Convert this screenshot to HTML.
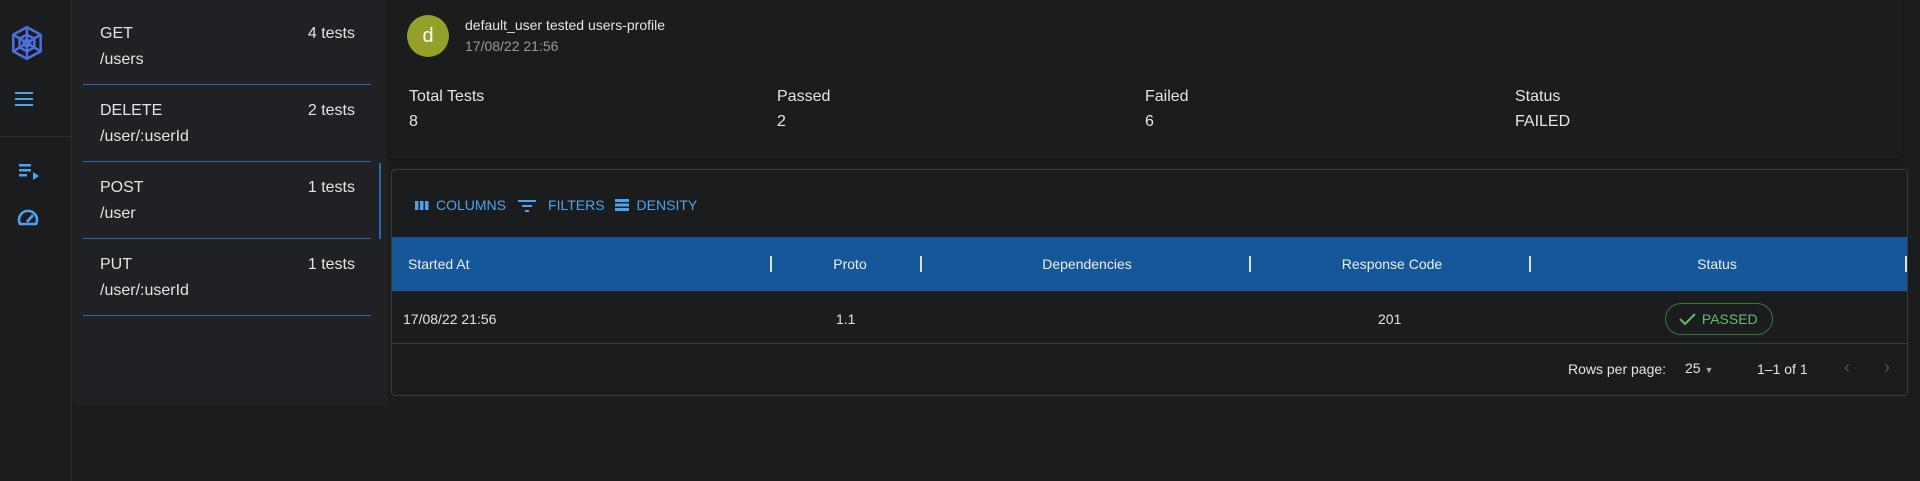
<!DOCTYPE html>
<html><head><meta charset="utf-8"><style>
*{box-sizing:border-box;margin:0;padding:0}
body{width:1920px;height:481px;background:#1b1c1e;font-family:"Liberation Sans",sans-serif;color:#e4e4e4;position:relative;overflow:hidden;font-size:16px}
.abs{position:absolute}
.side{left:0;top:0;width:72px;height:481px;border-right:1px solid #2a2b2d;background:#1b1c1e}
.list{left:73px;top:0;width:315px;height:405px;background:#202124}
.item{position:absolute;left:10px;width:288px;height:77px;border-bottom:1px solid #2a68b0}
.item .m{position:absolute;left:17px;top:17px}
.item .c{position:absolute;right:16px;top:17px}
.item .p{position:absolute;left:17px;top:43px}
.hdr{left:388px;top:0;width:1514px;height:159px;background:#1b1c1e;box-shadow:0 1px 2px #111}
.stat{position:absolute;top:88px;font-size:16px}
.stat div+div{margin-top:7px}
.tbl{left:391px;top:169px;width:1517px;height:227px;border:1px solid #3a3b3d;border-radius:4px}
.tool{position:absolute;top:27px;left:22px;color:#4da3f0;font-size:14px;display:flex;align-items:center}
.thead{position:absolute;left:0;top:67px;width:1515px;height:55px;background:#155799;font-size:14px;color:#eee}
.thead span{position:absolute;top:19px}
.sep{position:absolute;top:19px;width:2px;height:16px;background:#ddd}
.row span{position:absolute;font-size:14px}
</style></head><body>
<div class="abs side">
<svg class="abs" style="left:8px;top:23px" width="40" height="40" viewBox="0 0 38 38"><g fill="none" stroke="#4a6fe0" stroke-width="2.4"><polygon points="18,4 31,11 31,27 18,34 5,27 5,11"/><polygon points="18,11 25,15 25,23 18,27 11,23 11,15"/><path d="M18,4V34M5,11L31,27M31,11L5,27"/><circle cx="18" cy="19" r="3"/></g></svg>
<svg class="abs" style="left:14px;top:91px" width="20" height="16"><g fill="#4da3f0"><rect x="1" y="1" width="18" height="2"/><rect x="1" y="7" width="18" height="2"/><rect x="1" y="13" width="18" height="2"/></g></svg>
<div class="abs" style="left:0;top:136px;width:72px;height:1px;background:#2f3033"></div>
<svg class="abs" style="left:17px;top:162px" width="24" height="20"><g fill="#4da3f0"><rect x="2" y="2" width="12" height="2.5"/><rect x="2" y="7" width="12" height="2.5"/><rect x="2" y="12" width="8" height="2.5"/><polygon points="16,10 16,18 22,14"/></g></svg>
<svg class="abs" style="left:16px;top:206px" width="24" height="22"><path d="M4,18A9,9 0 1 1 20,18Z" fill="none" stroke="#4da3f0" stroke-width="2.6"/><path d="M11,16L17,9" stroke="#4da3f0" stroke-width="2.8"/></svg>
</div>
<div class="abs list">
<div class="item" style="top:8px"><span class="m">GET</span><span class="c">4 tests</span><span class="p">/users</span></div>
<div class="item" style="top:85px"><span class="m">DELETE</span><span class="c">2 tests</span><span class="p">/user/:userId</span></div>
<div class="item" style="top:162px"><span class="m">POST</span><span class="c">1 tests</span><span class="p">/user</span></div>
<div class="item" style="top:239px"><span class="m">PUT</span><span class="c">1 tests</span><span class="p">/user/:userId</span></div>
<div class="abs" style="left:306px;top:163px;width:2px;height:76px;background:#2a68b0"></div>
</div>
<div class="abs hdr">
<div class="abs" style="left:19px;top:15px;width:42px;height:42px;border-radius:50%;background:#94a02a;color:#fff;text-align:center;line-height:42px;font-size:20px">d</div>
<div class="abs" style="left:77px;top:17px;font-size:14px">default_user tested users-profile</div>
<div class="abs" style="left:77px;top:38px;font-size:14px;color:#999">17/08/22 21:56</div>
<div class="stat" style="left:21px"><div>Total Tests</div><div>8</div></div>
<div class="stat" style="left:389px"><div>Passed</div><div>2</div></div>
<div class="stat" style="left:757px"><div>Failed</div><div>6</div></div>
<div class="stat" style="left:1127px"><div>Status</div><div>FAILED</div></div>
</div>
<div class="abs tbl">
<div class="tool">
<svg width="16" height="14"><g fill="#4da3f0"><rect x="1" y="3" width="3.5" height="9"/><rect x="6" y="3" width="3.5" height="9"/><rect x="11" y="3" width="3.5" height="9"/></g></svg><span style="margin:0 12px 0 6px">COLUMNS</span>
<svg width="18" height="14"><g fill="#4da3f0"><rect x="0" y="2" width="18" height="2"/><rect x="4" y="7" width="10" height="2"/><rect x="7" y="12" width="4" height="2"/></g></svg><span style="margin:0 10px 0 12px">FILTERS</span>
<svg width="14" height="14"><g fill="#4da3f0"><rect x="0" y="1" width="14" height="3"/><rect x="0" y="5.5" width="14" height="3"/><rect x="0" y="10" width="14" height="3"/></g></svg><span style="margin-left:8px">DENSITY</span>
</div>
<div class="thead">
<span style="left:16px">Started At</span><div class="sep" style="left:378px"></div>
<span style="width:60px;text-align:center;left:428px">Proto</span><div class="sep" style="left:528px"></div>
<span style="left:600px;width:190px;text-align:center">Dependencies</span><div class="sep" style="left:857px"></div>
<span style="left:860px;width:280px;text-align:center">Response Code</span><div class="sep" style="left:1137px"></div>
<span style="left:1180px;width:290px;text-align:center">Status</span><div class="sep" style="left:1513px"></div>
</div>
<div class="row">
<span style="left:11px;top:141px">17/08/22 21:56</span>
<span style="left:444px;top:141px">1.1</span>
<span style="left:986px;top:141px">201</span>
<div class="abs" style="left:1273px;top:133px;width:108px;height:32px;border:1px solid #2e7d32;border-radius:16px;color:#66bb6a;font-size:14px;line-height:30px;padding-left:12px"><svg width="20" height="16" style="vertical-align:-3px"><path d="M2,8L7,13L17,3" fill="none" stroke="#66bb6a" stroke-width="2"/></svg> PASSED</div>
</div>
<div class="abs" style="left:0;top:173px;width:1515px;height:1px;background:#3a3b3d"></div>
<div class="abs" style="left:0;top:121px;width:1515px;height:1px;background:#2a2b2d"></div>
<span class="abs" style="left:1176px;top:191px;font-size:14px">Rows per page:</span>
<span class="abs" style="left:1293px;top:190px;font-size:14px">25 <span style="font-size:9px;color:#aaa">▼</span></span>
<span class="abs" style="left:1365px;top:191px;font-size:14px">1–1 of 1</span>
<span class="abs" style="left:1452px;top:187px;font-size:18px;color:#555">‹</span>
<span class="abs" style="left:1492px;top:187px;font-size:18px;color:#555">›</span>
</div>
</body></html>
